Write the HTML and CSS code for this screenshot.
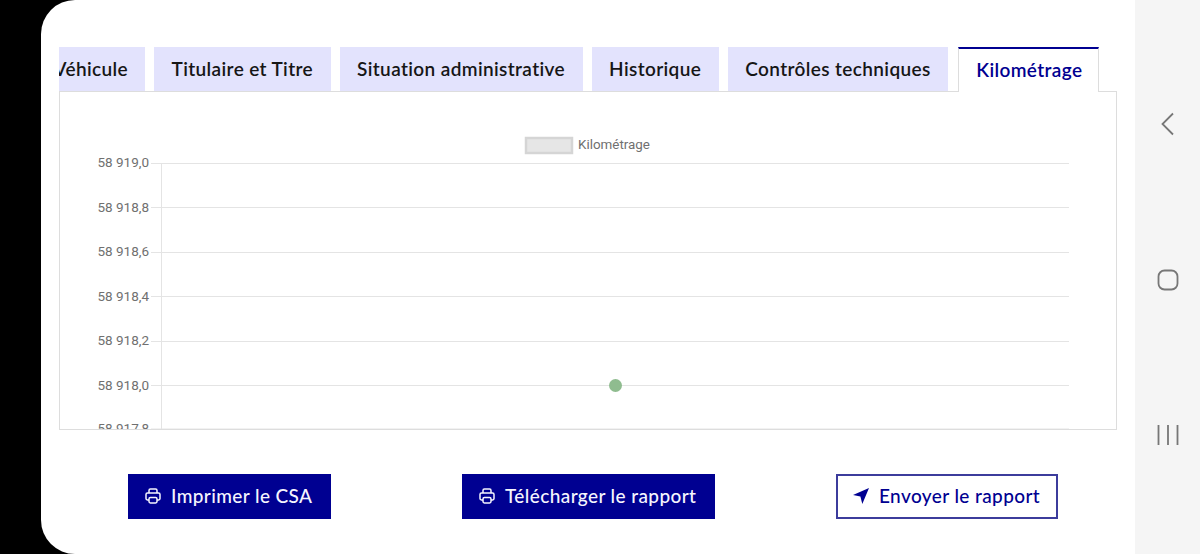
FILE: index.html
```html
<!DOCTYPE html>
<html lang="fr">
<head>
<meta charset="utf-8">
<title>Kilométrage</title>
<link rel="stylesheet" href="styles.css">
</head>
<body>
<div class="device">
  <main class="screen">
    <nav class="tabs">
      <div class="tab tab-first">Véhicule</div>
      <div class="tab">Titulaire et Titre</div>
      <div class="tab">Situation administrative</div>
      <div class="tab">Historique</div>
      <div class="tab">Contrôles techniques</div>
      <div class="tab tab-active">Kilométrage</div>
    </nav>
    <section class="panel">
      <svg class="chart" width="1056" height="337" viewBox="0 0 1056 337">
        <rect x="466" y="46" width="46" height="15" fill="#e6e6e6" stroke="#d5d5d5" stroke-width="2.500"/>
        <text class="legend" x="518" y="57">Kilométrage</text>
        <g class="grid">
          <line x1="101.500" y1="71" x2="101.500" y2="337"/>
          <line x1="91" y1="71.500" x2="1009" y2="71.500"/>
          <line x1="91" y1="115.500" x2="1009" y2="115.500"/>
          <line x1="91" y1="160.500" x2="1009" y2="160.500"/>
          <line x1="91" y1="204.500" x2="1009" y2="204.500"/>
          <line x1="91" y1="249.500" x2="1009" y2="249.500"/>
          <line x1="91" y1="293.500" x2="1009" y2="293.500"/>
          <line x1="91" y1="337" x2="1009" y2="337"/>
        </g>
        <g class="ticks">
          <text x="89" y="75">58 919,0</text>
          <text x="89" y="119.500">58 918,8</text>
          <text x="89" y="164">58 918,6</text>
          <text x="89" y="208.500">58 918,4</text>
          <text x="89" y="253">58 918,2</text>
          <text x="89" y="297.500">58 918,0</text>
          <text x="89" y="341">58 917,8</text>
        </g>
        <circle cx="555.500" cy="293.500" r="6.500" fill="#8fbc8f"/>
      </svg>
    </section>
    <div class="actions">
      <button class="btn btn-print">
        <svg class="icon" viewBox="0 0 16 16" width="16" height="16"><path d="M4 5V2.400A1.400 1.400 0 0 1 5.400 1h5.200A1.400 1.400 0 0 1 12 2.400V5M4 12H2.400A1.400 1.400 0 0 1 1 10.600V6.400A1.400 1.400 0 0 1 2.400 5h11.200A1.400 1.400 0 0 1 15 6.400v4.200a1.400 1.400 0 0 1-1.400 1.400H12M5.400 9.500h5.200A1.400 1.400 0 0 1 12 10.900v2.700a1.400 1.400 0 0 1-1.400 1.400H5.400A1.400 1.400 0 0 1 4 13.600v-2.700a1.400 1.400 0 0 1 1.400-1.400z" fill="none" stroke="currentColor" stroke-width="1.500"/></svg>
        Imprimer le CSA
      </button>
      <button class="btn btn-download">
        <svg class="icon" viewBox="0 0 16 16" width="16" height="16"><path d="M4 5V2.400A1.400 1.400 0 0 1 5.400 1h5.200A1.400 1.400 0 0 1 12 2.400V5M4 12H2.400A1.400 1.400 0 0 1 1 10.600V6.400A1.400 1.400 0 0 1 2.400 5h11.200A1.400 1.400 0 0 1 15 6.400v4.200a1.400 1.400 0 0 1-1.400 1.400H12M5.400 9.500h5.200A1.400 1.400 0 0 1 12 10.900v2.700a1.400 1.400 0 0 1-1.400 1.400H5.400A1.400 1.400 0 0 1 4 13.600v-2.700a1.400 1.400 0 0 1 1.400-1.400z" fill="none" stroke="currentColor" stroke-width="1.500"/></svg>
        Télécharger le rapport
      </button>
      <button class="btn btn-send">
        <svg class="icon" viewBox="0 0 16 16" width="16" height="16"><path d="M16 0 9.300 16 7.400 8.600 0 7z" fill="currentColor"/></svg>
        Envoyer le rapport
      </button>
    </div>
  </main>
  <aside class="navbar">
    <svg width="16" height="24" viewBox="0 0 16 24"><path d="M13 1.500 2.500 12 13 22.500" fill="none" stroke="#777" stroke-width="1.800"/></svg>
    <svg width="22" height="22" viewBox="0 0 22 22"><rect x="1.500" y="1.500" width="19" height="19" rx="6" fill="none" stroke="#777" stroke-width="1.800"/></svg>
    <svg width="22" height="22" viewBox="0 0 22 22"><path d="M1.500 1v20M11 1v20M20.500 1v20" fill="none" stroke="#777" stroke-width="1.800"/></svg>
  </aside>
</div>
</body>
</html>
```
FILE: styles.css
```css
* { box-sizing: border-box; }
html, body { margin: 0; height: 100%; }
body { background: #000; overflow: hidden; font-family: "Lato", "Liberation Sans", sans-serif; }
.device { display: flex; height: 554px; padding-left: 41px; }
.screen {
  flex: 1;
  background: #fff;
  border-radius: 34px 0 0 34px;
  padding: 47px 18px 0;
  min-width: 0;
}
.navbar {
  width: 65px;
  background: #f5f5f5;
  display: flex;
  flex-direction: column;
  align-items: center;
  padding-top: 112px;
  gap: 133px;
}
.tabs {
  display: flex;
  gap: 9px;
  height: 45px;
  margin-bottom: -1px;
  overflow: hidden;
  align-items: flex-start;
  position: relative;
  z-index: 1;
}
.tab {
  flex: none;
  height: 44px;
  padding: 0 17.500px;
  background: #e3e3fd;
  color: #161616;
  font-size: 19px;
  font-weight: 600;
  letter-spacing: 0.38px;
  line-height: 44px;
  white-space: nowrap;
}
.tab-first { margin-left: -23px; width: 109px; }
.tab-active {
  height: 45px;
  margin-left: 1px;
  background: #fff;
  color: #000091;
  border-top: 2px solid #000091;
  border-left: 1px solid #ddd;
  border-right: 1px solid #ddd;
  line-height: 42px;
  padding: 0 17px;
  width: 141px;
}
.panel {
  height: 339px;
  border: 1px solid #ddd;
  overflow: hidden;
}
.chart { display: block; font-family: "Roboto", sans-serif; }
.grid line { stroke: #e4e4e4; stroke-width: 1; }
.ticks text { fill: #707070; font-size: 13.500px; text-anchor: end; }
.legend { fill: #707070; font-size: 13.400px; }
.actions { display: flex; margin-top: 44px; padding-left: 69px; }
.btn {
  height: 45px;
  display: flex;
  align-items: center;
  gap: 10px;
  padding: 0 16px 2px;
  font-family: inherit;
  font-size: 19px;
  font-weight: 500;
  letter-spacing: 0.4px;
  border: 1px solid #000091;
  background: #000091;
  color: #f5f5fe;
  white-space: nowrap;
}
.icon { flex: none; }
.btn-print { width: 203px; }
.btn-download { width: 253px; margin-left: 131px; }
.btn-send {
  width: 222px;
  margin-left: 121px;
  background: #fff;
  color: #000091;
  border: 2px solid #3c3c9c;
  padding-left: 15px;
}
```
